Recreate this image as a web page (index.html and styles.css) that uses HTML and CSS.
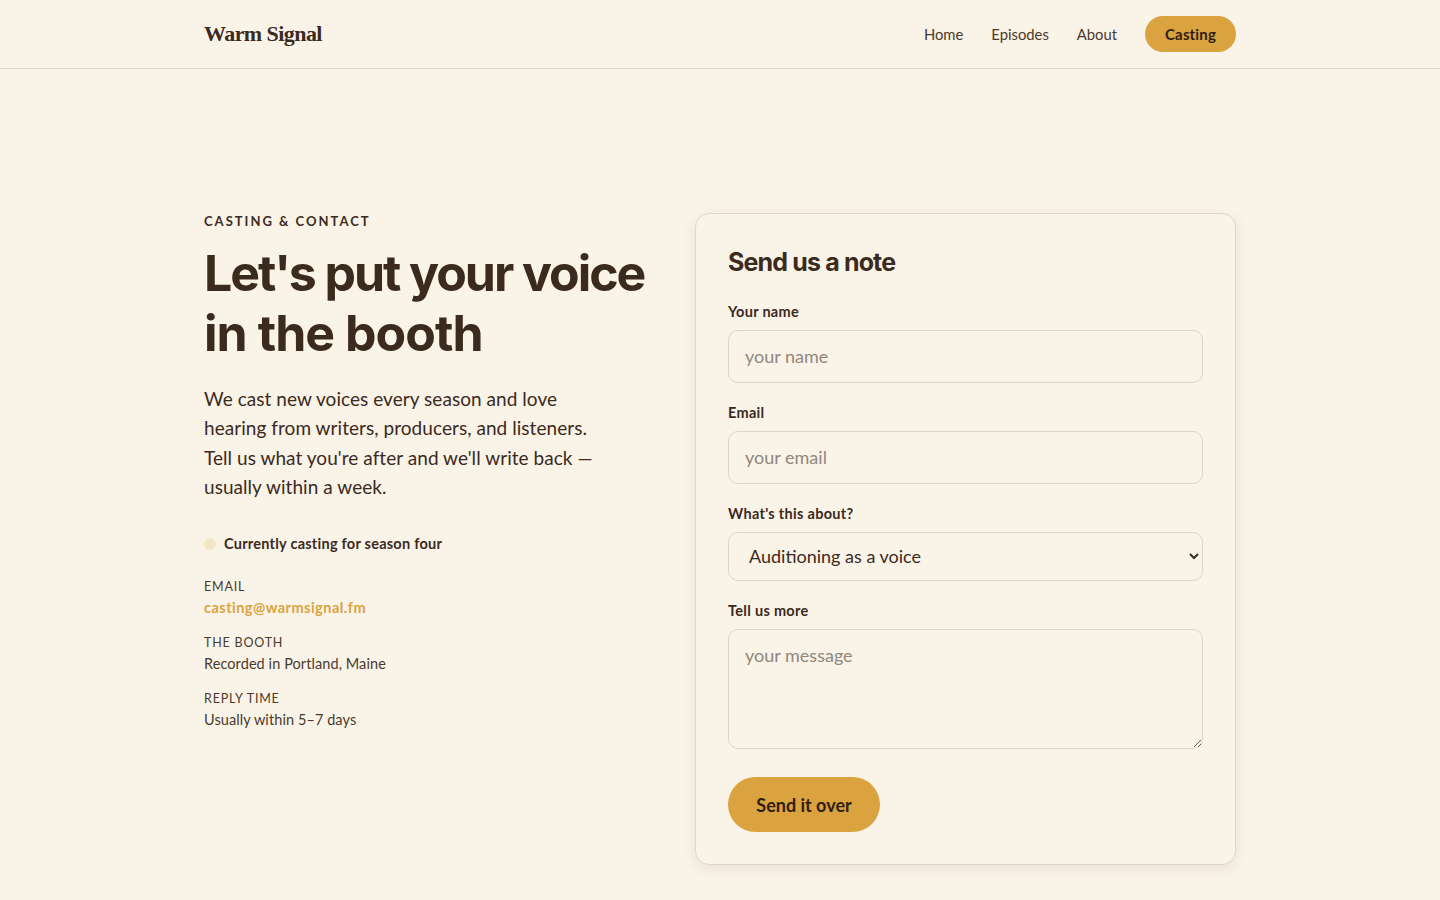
FILE: index.html
```html
<!DOCTYPE html>
<html lang="en">
<head>
<meta charset="utf-8">
<title>Warm Signal</title>
<link rel="stylesheet" href="styles.css">
</head>
<body>
<header class="topbar">
  <div class="wrap topbar-in">
    <a class="logo" href="#">Warm Signal</a>
    <nav class="nav">
      <a href="#">Home</a>
      <a href="#">Episodes</a>
      <a href="#">About</a>
      <a class="nav-cta" href="#">Casting</a>
    </nav>
  </div>
</header>
<main class="wrap main">
  <section class="intro">
    <p class="eyebrow">CASTING &amp; CONTACT</p>
    <h1><span class="line-one">Let's put your voice</span> <span class="line-two">in the booth</span></h1>
    <p class="lede">We cast new voices every season and love hearing from writers, producers, and listeners. Tell us what you're after and we'll write back — usually within a week.</p>
    <p class="status"><span class="dot"></span>Currently casting for season four</p>
    <dl class="facts">
      <dt>EMAIL</dt>
      <dd><a href="#">casting@warmsignal.fm</a></dd>
      <dt>THE BOOTH</dt>
      <dd>Recorded in Portland, Maine</dd>
      <dt>REPLY TIME</dt>
      <dd>Usually within 5–7 days</dd>
    </dl>
  </section>
  <form class="card">
    <h2>Send us a note</h2>
    <label class="lbl" for="n">Your name</label>
    <input class="field" id="n" placeholder="your name">
    <label class="lbl" for="e">Email</label>
    <input class="field" id="e" placeholder="your email">
    <label class="lbl" for="s">What's this about?</label>
    <select class="field pick" id="s"><option>Auditioning as a voice</option></select>
    <label class="lbl" for="m">Tell us more</label>
    <textarea class="field area" id="m" placeholder="your message"></textarea>
    <button class="send" type="button">Send it over</button>
  </form>
</main>
</body>
</html>
```
FILE: styles.css
```css
* { box-sizing: border-box; }
html, body { margin: 0; }
body { background: #faf3e7; color: #3b2a1e; font-family: "Lato", "Noto Sans", sans-serif; height: 900px; overflow: hidden; }
a { color: inherit; text-decoration: none; }
.wrap { width: 1032px; margin: 0 auto; }
.topbar { height: 69px; border-bottom: 1px solid #ddd6c9; }
.topbar-in { height: 68px; display: flex; align-items: center; justify-content: space-between; }
.logo { font-family: "Liberation Serif", serif; font-weight: 700; font-size: 22px; letter-spacing: -0.56px; }
.nav { display: flex; align-items: center; gap: 28px; font-size: 14.8px; color: #4a3a2d; }
.nav-cta { background: #dba33f; border-radius: 18px; height: 36px; padding: 0 20px; display: flex; align-items: center; font-size: 15px; font-weight: 700; color: #2f2013; letter-spacing: 0.15px; }
.main { display: grid; grid-template-columns: 459px 541px; column-gap: 32px; padding-top: 144px; align-items: start; }
.eyebrow { margin: 0; font-size: 13px; font-weight: 700; letter-spacing: 2px; line-height: 16px; }
h1 { margin: 14px 0 0; font-family: "Inter", sans-serif; font-weight: 700; font-size: 50px; line-height: 60px; }
.line-one, .line-two { display: block; }
.line-one { letter-spacing: -2.05px; }
.line-two { letter-spacing: -0.95px; }
.lede { margin: 21px 0 0; font-size: 19px; line-height: 29.4px; width: 400px; letter-spacing: 0.05px; }
.status { margin: 32px 0 0; display: flex; align-items: center; gap: 8px; font-size: 14.5px; font-weight: 700; line-height: 20px; letter-spacing: 0.25px; }
.dot { width: 12px; height: 12px; border-radius: 50%; background: #f5e6c8; }
.facts { margin: 22px 0 0; color: #4a3a2d; }
.facts dt { font-size: 12.5px; letter-spacing: 0.8px; line-height: 22px; }
.facts dd { margin: 0 0 14px; font-size: 14.5px; line-height: 20px; letter-spacing: 0.08px; }
.facts a { color: #dba33f; font-weight: 700; letter-spacing: 0.48px; }
.card { border: 1px solid #ddd6c9; border-radius: 14px; padding: 32px; box-shadow: 0 4px 14px rgba(59,42,30,.09); display: flex; flex-direction: column; align-items: flex-start; background: #faf3e7; }
h2 { margin: 0 0 25px; font-family: "Inter", sans-serif; font-size: 25px; line-height: 32px; font-weight: 700; letter-spacing: -0.85px; }
.lbl { font-size: 14.5px; font-weight: 700; line-height: 18px; margin-bottom: 9px; letter-spacing: 0.3px; }
.field { width: 100%; height: 53px; margin-bottom: 21px; border: 1px solid #ddd5c7; border-radius: 10px; background: #faf3e7; padding: 0 16px 2px; font: 18px "Lato", sans-serif; color: #3b2a1e; }
.field::placeholder { color: #8f887c; opacity: 1; }
.pick { height: 49px; }
.area { height: 120px; padding-top: 14px; margin-bottom: 28px; display: block; }
.send { height: 55px; width: 152px; border: 0; border-radius: 28px; background: #dba33f; color: #2f2013; font: 700 18px "Lato", sans-serif; }
```
